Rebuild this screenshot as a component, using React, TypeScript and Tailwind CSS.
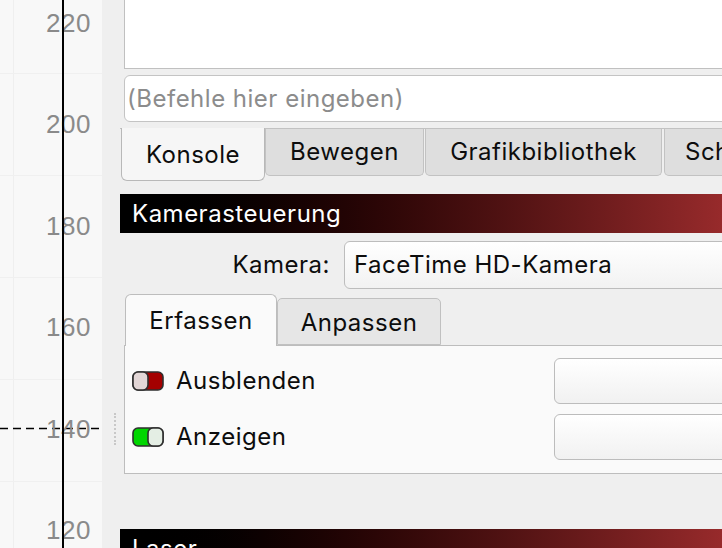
import React from "react";

const FONT = "font-['Inter','Liberation_Sans',sans-serif]";

const ticks = [
  { label: "220", y: 22.5 },
  { label: "200", y: 123.9 },
  { label: "180", y: 225.3 },
  { label: "160", y: 326.7 },
  { label: "140", y: 428 },
  { label: "120", y: 529.5 },
];

function Plot() {
  return (
    <div className="w-[102px] h-full shrink-0 bg-[#f8f8f8]">
      <svg width="102" height="548" viewBox="0 0 102 548">
        <line x1="13.5" y1="0" x2="13.5" y2="548" stroke="#efefef" strokeWidth="1" />
        {[73, 175, 277, 379, 481].map((y) => (
          <line key={y} x1="0" y1={y + 0.5} x2="102" y2={y + 0.5} stroke="#f0f0f0" strokeWidth="1" />
        ))}
        <line x1="0" y1="428.5" x2="102" y2="428.5" stroke="#000" strokeWidth="1.5" strokeDasharray="8 5" />
        {ticks.map((t) => (
          <text
            key={t.label}
            x="91"
            y={t.y + 9.5}
            textAnchor="end"
            fontFamily="'Liberation Sans', Arial, sans-serif"
            fontSize="26"
            fill="#8a8a8a"
          >
            {t.label}
          </text>
        ))}
        <line x1="63" y1="0" x2="63" y2="548" stroke="#000" strokeWidth="2" />
      </svg>
    </div>
  );
}

function Toggle({ on }: { on: boolean }) {
  return (
    <svg width="32" height="20" viewBox="0 0 32 20">
      <rect x="1" y="1" width="30" height="18" rx="5" fill={on ? "#00d600" : "#a40000"} stroke="#2e2e2e" strokeWidth="1.6" />
      {on ? (
        <rect x="16" y="1" width="15" height="18" rx="5" fill="#e4eee4" stroke="#2e2e2e" strokeWidth="1.6" />
      ) : (
        <rect x="1" y="1" width="15" height="18" rx="5" fill="#e2d6d6" stroke="#2e2e2e" strokeWidth="1.6" />
      )}
    </svg>
  );
}

function SectionBar({ title }: { title: string }) {
  return (
    <div className="h-[39px] w-[602px] shrink-0 bg-linear-to-r from-black to-[#972a2b] flex items-center pl-[12px] text-white">
      {title}
    </div>
  );
}

export default function App() {
  return (
    <div className={`w-[722px] h-[548px] overflow-hidden flex bg-[#efefef] text-[#0d0d0d] text-[24px] tracking-[0.5px] ${FONT}`}>
      <Plot />

      {/* splitter */}
      <div className="w-[18px] shrink-0 flex items-center">
        <div className="ml-[12px] mt-[310px] h-[32px] border-l-2 border-dotted border-[#c8c8c8]" />
      </div>

      <div className="w-[602px] shrink-0 flex flex-col">
        {/* console output */}
        <div className="ml-[4px] -mr-4 h-[69px] shrink-0 bg-white border-l border-b border-[#c0c0c0]" />

        {/* command input */}
        <div className="ml-[4px] -mr-4 mt-[6px] h-[47px] shrink-0 bg-white border border-[#c4c4c4] rounded-[6px] flex items-center pl-[2px] text-[#8c8c8c]">
          (Befehle hier eingeben)
        </div>

        {/* tabs */}
        <div className="mt-[6px] -mr-4 shrink-0 flex items-start border-t border-[#c2c2c2]">
          <div className="ml-px -mt-px w-[144px] h-[53px] shrink-0 bg-[#f6f6f6] border-x border-b border-[#b8b8b8] rounded-b-[6px] flex items-center justify-center pt-[2px]">
            Konsole
          </div>
          <div className="w-[159px] h-[47px] shrink-0 bg-[#dedede] border-x border-b border-[#c2c2c2] rounded-b-[5px] flex items-center justify-center">
            Bewegen
          </div>
          <div className="ml-[1px] w-[237px] h-[47px] shrink-0 bg-[#dedede] border-x border-b border-[#c2c2c2] rounded-b-[5px] flex items-center justify-center">
            Grafikbibliothek
          </div>
          <div className="ml-[2px] w-[120px] h-[47px] shrink-0 overflow-hidden whitespace-nowrap bg-[#dedede] border-x border-b border-[#c2c2c2] rounded-b-[5px] flex items-center pl-[20px]">
            Schnittstelle
          </div>
        </div>

        <div className="mt-[13px] shrink-0">
          <SectionBar title="Kamerasteuerung" />
        </div>

        {/* camera select */}
        <div className="mt-[8px] shrink-0 flex items-center">
          <div className="w-[210px] text-right">Kamera:</div>
          <div className="ml-[14px] -mr-4 flex-1 h-[48px] rounded-[6px] border border-[#bdbdbd] bg-linear-to-b from-white to-[#f2f2f2] flex items-center pl-[9px]">
            FaceTime HD-Kamera
          </div>
        </div>

        {/* sub tabs */}
        <div className="mt-[5px] ml-[5px] shrink-0 flex items-end">
          <div className="relative z-10 -mb-px w-[152px] h-[52px] bg-[#fafafa] border-x border-t border-[#bdbdbd] rounded-t-[6px] flex items-center justify-center">
            Erfassen
          </div>
          <div className="w-[164px] h-[47px] bg-[#e6e6e6] border border-[#c0c0c0] rounded-t-[5px] flex items-center justify-center pt-[3px]">
            Anpassen
          </div>
        </div>

        <div className="ml-[4px] -mr-4 h-[129px] shrink-0 bg-[#fafafa] border border-[#bdbdbd] pt-[12px] flex flex-col gap-[10px]">
          {[
            { label: "Ausblenden", on: false },
            { label: "Anzeigen", on: true },
          ].map((row) => (
            <div key={row.label} className="flex items-center h-[46px] shrink-0">
              <div className="w-[429px] shrink-0 flex items-center pl-[7px] gap-[12px]">
                <Toggle on={row.on} />
                <span>{row.label}</span>
              </div>
              <div className="flex-1 h-[46px] rounded-[6px] border border-[#bcbcbc] bg-linear-to-b from-white to-[#f1f1f1]" />
            </div>
          ))}
        </div>

        <div className="mt-[55px] shrink-0">
          <SectionBar title="Laser" />
        </div>
      </div>
    </div>
  );
}
